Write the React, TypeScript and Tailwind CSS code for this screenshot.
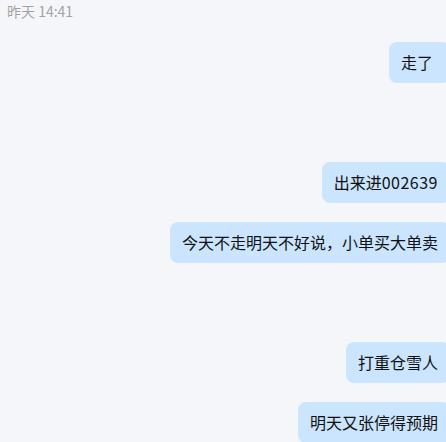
import React from "react";

const font = { fontFamily: '"Noto Sans CJK SC", "Noto Sans", sans-serif' };

type Row = { text?: React.ReactNode };

const rows: Row[] = [
  { text: "走了" },
  {},
  {
    text: (
      <>
        出来进<span className="tracking-[0.5px]">002639</span>
      </>
    ),
  },
  { text: "今天不走明天不好说，小单买大单卖" },
  {},
  { text: "打重仓雪人" },
  { text: "明天又张停得预期" },
];

export default function App() {
  return (
    <div
      className="w-[446px] h-[442px] overflow-hidden bg-[#f5f6fa] font-['Noto_Sans_CJK_SC','Noto_Sans',sans-serif]"
      style={font}
    >
      <div className="mr-[-4px] flex flex-col gap-[19px]">
        <div className="pl-[7px] h-[23px] leading-[23px] text-[14px] text-[#a3a3a3]">
          昨天 14:41
        </div>
        {rows.map((r, i) =>
          r.text ? (
            <div key={i} className="flex justify-end">
              <div className="h-[41px] min-w-[61px] px-3 leading-[41px] text-[16px] text-[#111111] bg-[#cae5fd] rounded-[8px] whitespace-nowrap">
                {r.text}
              </div>
            </div>
          ) : (
            <div key={i} className="h-[41px]" />
          )
        )}
      </div>
    </div>
  );
}
